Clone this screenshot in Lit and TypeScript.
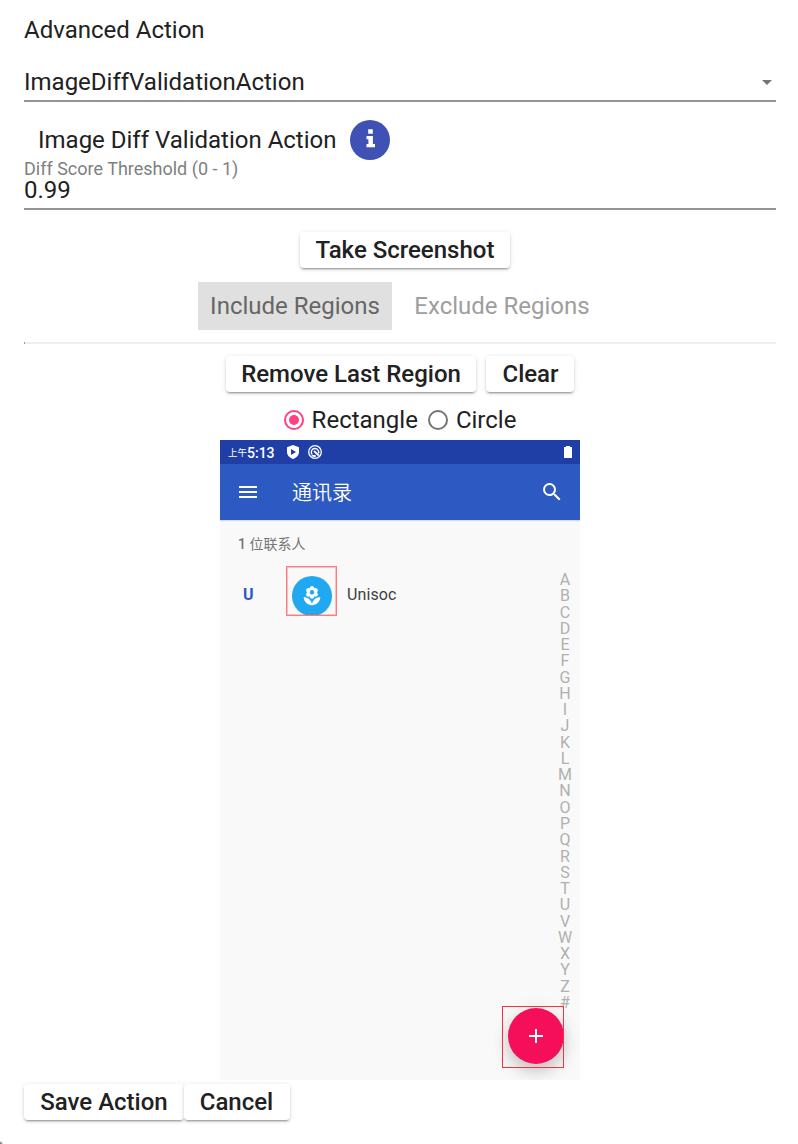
import { LitElement, html, css } from "lit";
import { customElement, state } from "lit/decorators.js";

const LETTERS = "ABCDEFGHIJKLMNOPQRSTUVWXYZ#".split("");

@customElement("phone-preview")
class PhonePreview extends LitElement {
  static styles = css`
    :host {
      display: flex;
      flex-direction: column;
      position: relative;
      width: 360px;
      height: 640px;
      background: #f9f9f9;
      overflow: hidden;
      font-family: Roboto, "Noto Sans CJK SC", sans-serif;
    }
    svg { display: block; flex: none; }
    .status {
      display: flex;
      align-items: center;
      height: 24px;
      padding: 0 6px 0 8px;
      box-sizing: border-box;
      background: #1f3ea6;
      color: #fff;
    }
    .ampm { font-size: 9.5px; line-height: 24px; padding-top: 2px; }
    .time { font-size: 14px; line-height: 24px; font-weight: 500; padding-top: 1px; width: 37.5px; }
    .target { margin-left: 6px; }
    .battery { margin-left: auto; }
    .bar {
      display: flex;
      align-items: center;
      height: 56px;
      padding: 0 16px;
      box-sizing: border-box;
      background: #2c59c2;
      color: #fff;
      box-shadow: 0 1px 1px rgba(0, 0, 0, 0.12);
    }
    .title { margin-left: 32px; padding-top: 2px; font-size: 20px; line-height: 54px; flex: 1; font-weight: 350; }
    .count { padding: 14px 18px 0; font-size: 14px; line-height: 20px; color: #757575; }
    .digit { font-weight: 500; }
    .body { display: flex; justify-content: space-between; }
    .contact { display: flex; align-items: center; height: 40px; margin-top: 22px; }
    .initial { width: 49px; padding: 0 0 2px 23px; color: #2c59c2; font-size: 16px; font-weight: 700; }
    .avatar {
      width: 40px; height: 40px; border-radius: 50%; background: #20a9f0;
      display: flex; align-items: center; justify-content: center;
    }
    .name { margin-left: 15px; font-size: 16px; color: #3f3f3f; letter-spacing: 0.1px; padding-bottom: 2px; }
    .index { width: 30px; margin-top: 18px; color: #b0b0b0; font-size: 16px; text-align: center; }
    .letter { height: 16.28px; line-height: 16.28px; }
    .region { position: absolute; box-sizing: border-box; border: 1px solid #f9303f; }
    .r1 { left: 66px; top: 126px; width: 51px; height: 50px; border-color: #fb7a84; box-shadow: inset 0 0 0 1px rgba(251, 80, 95, 0.35); }
    .r2 { left: 282px; top: 566px; width: 62px; height: 62px; }
    .fab {
      position: absolute; left: 288px; top: 568px; width: 56px; height: 56px;
      border-radius: 50%; background: #f50f5b;
      display: flex; align-items: center; justify-content: center;
      box-shadow: 0 8px 16px rgba(0, 0, 0, 0.18), 0 2px 20px rgba(0, 0, 0, 0.08);
    }
  `;
  render() {
    return html`
      <div class="status">
        <span class="ampm">上午</span><span class="time">5:13</span>
        <svg width="16" height="16" viewBox="0 0 16 16">
          <path fill="#fff" d="M8 1 14 3.2V8c0 3.2-2.4 5.8-6 7-3.600-1.200-6-3.800-6-7V3.200z" />
          <path fill="#1f3ea6" d="M6 5v6l5-3z" />
        </svg>
        <svg class="target" width="16" height="16" viewBox="0 0 16 16" fill="none" stroke="#fff">
          <circle cx="8" cy="8" r="6.300" stroke-width="1.300" />
          <path d="M5 10.400a3.700 3.700 0 1 1 6.500-1" stroke-width="1.400" />
          <path d="M7 7l4.800 4.500M4.800 11.200q2 1.200 4 .6" stroke-width="1.800" />
        </svg>
        <svg class="battery" width="12" height="14" viewBox="0 0 12 14"><path fill="#fff" d="M4 1h4v1h2v11H2V2h2z" /></svg>
      </div>
      <div class="bar">
        <svg width="24" height="24" viewBox="0 0 24 24"><path fill="#fff" d="M3 18h18v-2H3zm0-5h18v-2H3zm0-7v2h18V6z" /></svg>
        <span class="title">通讯录</span>
        <svg width="24" height="24" viewBox="0 0 24 24"><path fill="#fff" d="M15.500 14h-.79l-.28-.27A6.471 6.471 0 0 0 16 9.500 6.500 6.500 0 1 0 9.500 16c1.610 0 3.090-.59 4.230-1.570l.27.28v.79l5 4.990L20.490 19zm-6 0C7.010 14 5 11.990 5 9.500S7.010 5 9.500 5 14 7.010 14 9.500 11.990 14 9.500 14z" /></svg>
      </div>
      <div class="count"><span class="digit">1</span> 位联系人</div>
      <div class="body">
        <div class="contact">
          <span class="initial">U</span>
          <span class="avatar">
            <svg width="22" height="22" viewBox="0 0 24 24"><path fill="#fff" d="M12 22c4.970 0 9-4.030 9-9-4.970 0-9 4.030-9 9zM5.600 10.250c0 1.380 1.120 2.500 2.500 2.500.53 0 1.010-.16 1.420-.44l-.02.19c0 1.380 1.120 2.500 2.500 2.500s2.500-1.120 2.500-2.500l-.02-.19c.4.28.89.44 1.420.44 1.380 0 2.500-1.120 2.500-2.500 0-1-.59-1.850-1.430-2.250.84-.4 1.430-1.250 1.430-2.250 0-1.380-1.120-2.500-2.500-2.500-.53 0-1.010.16-1.420.44l.02-.19C14.500 2.120 13.380 1 12 1S9.500 2.120 9.500 3.500l.02.19c-.4-.28-.89-.44-1.420-.44-1.380 0-2.500 1.120-2.500 2.500 0 1 .59 1.850 1.430 2.250-.84.4-1.430 1.250-1.430 2.250zM12 5.500c1.380 0 2.500 1.120 2.500 2.500s-1.120 2.500-2.500 2.500S9.500 9.380 9.500 8s1.120-2.500 2.500-2.500zM3 13c0 4.970 4.030 9 9 9 0-4.970-4.030-9-9-9z" /></svg>
          </span>
          <span class="name">Unisoc</span>
        </div>
        <div class="index">${LETTERS.map((l) => html`<div class="letter">${l}</div>`)}</div>
      </div>
      <div class="fab">
        <svg width="24" height="24" viewBox="0 0 24 24"><path fill="#fff" d="M19 13h-6v6h-2v-6H5v-2h6V5h2v6h6z" /></svg>
      </div>
      <div class="region r1"></div>
      <div class="region r2"></div>
    `;
  }
}

@customElement("app-root")
class AppRoot extends LitElement {
  @state() shape = "Rectangle";

  static styles = css`
    :host {
      display: flex;
      flex-direction: column;
      box-sizing: border-box;
      height: 1144px;
      padding: 0 22px 0 24px;
      background: radial-gradient(circle at 0 100%, #8a8a8a 0 1.5px, transparent 3px) #fff;
      color: #212121;
      font: 24px/28px Roboto, sans-serif;
      overflow: hidden;
    }
    svg { display: block; flex: none; }
    .heading { padding-top: 16px; height: 36px; }
    .select {
      display: flex; justify-content: space-between; align-items: center;
      height: 50px; padding: 12px 4px 0 0; box-sizing: border-box;
      border-bottom: 2px solid #949494;
    }
    .info-row { display: flex; align-items: center; height: 40px; margin-top: 18px; padding-left: 14px; }
    .info-title { width: 312px; white-space: nowrap; }
    .info {
      width: 40px; height: 40px; border-radius: 50%; background: #3f51b5;
      display: flex; align-items: center; justify-content: center;
    }
    .label { font-size: 18px; line-height: 18px; color: #808080; }
    .value { height: 30px; line-height: 24px; border-bottom: 2px solid #949494; }
    .row { display: flex; justify-content: center; }
    button {
      font: 500 24px/36px Roboto, sans-serif;
      color: #212121; height: 36px; padding: 0; border: 0; border-radius: 4px; background: #fff;
      box-shadow: 0 3px 1px -2px rgba(0, 0, 0, 0.2), 0 2px 2px rgba(0, 0, 0, 0.14), 0 1px 5px rgba(0, 0, 0, 0.12);
    }
    .shot { margin-top: 22px; padding-left: 10px; }
    .shot button { width: 210px; }
    .tabs { margin-top: 14px; padding-right: 3px; gap: 13px; }
    .tab { width: 194px; height: 48px; line-height: 48px; text-align: center; color: #9e9e9e; }
    .tab.on { background: #e0e0e0; color: #666; }
    .rule { height: 2px; margin-top: 12px; background: #eee; border-left: 1px solid #9a9a9a; }
    .edit { margin-top: 12px; gap: 10px; }
    .remove { width: 250px; }
    .clear { width: 88px; padding-left: 1px; }
    .shapes { margin-top: 14px; height: 28px; }
    .shape { display: flex; align-items: center; gap: 8px; margin-right: 10px; }
    .shape:last-child { margin-right: 0; }
    .radio {
      width: 20px; height: 20px; border-radius: 50%; border: 2px solid #757575; box-sizing: border-box;
      display: flex; align-items: center; justify-content: center;
    }
    .radio.on { border-color: #ff4081; }
    .radio.on::after { content: ""; width: 10px; height: 10px; border-radius: 50%; background: #ff4081; }
    .phone { margin-top: 6px; }
    .actions { display: flex; margin-top: 4px; }
    .save { width: 160px; }
    .cancel { width: 106px; padding-right: 1px; }
  `;

  render() {
    return html`
      <div class="heading">Advanced Action</div>
      <div class="select">
        <span>ImageDiffValidationAction</span>
        <svg width="10" height="5" viewBox="0 0 10 5"><path d="M0 0h10L5 5z" fill="#757575" /></svg>
      </div>
      <div class="info-row">
        <span class="info-title">Image Diff Validation Action</span>
        <span class="info">
          <svg width="12" height="22" viewBox="0 0 12 22"><path fill="#fff" d="M4.200.3h4.600v4.500H4.200zM2.500 7h6.400v8H11v3.200H2.500V15h1.900v-4.800H2.500z" /></svg>
        </span>
      </div>
      <div class="label">Diff Score Threshold (0 - 1)</div>
      <div class="value">0.99</div>
      <div class="row shot"><button>Take Screenshot</button></div>
      <div class="row tabs">
        <div class="tab on">Include Regions</div>
        <div class="tab">Exclude Regions</div>
      </div>
      <div class="rule"></div>
      <div class="row edit">
        <button class="remove">Remove Last Region</button>
        <button class="clear">Clear</button>
      </div>
      <div class="row shapes">
        ${["Rectangle", "Circle"].map(
          (s) => html`<label class="shape" @click=${() => (this.shape = s)}>
            <span class="radio ${this.shape === s ? "on" : ""}"></span>${s}
          </label>`
        )}
      </div>
      <div class="row phone"><phone-preview></phone-preview></div>
      <div class="actions">
        <button class="save">Save Action</button>
        <button class="cancel">Cancel</button>
      </div>
    `;
  }
}
